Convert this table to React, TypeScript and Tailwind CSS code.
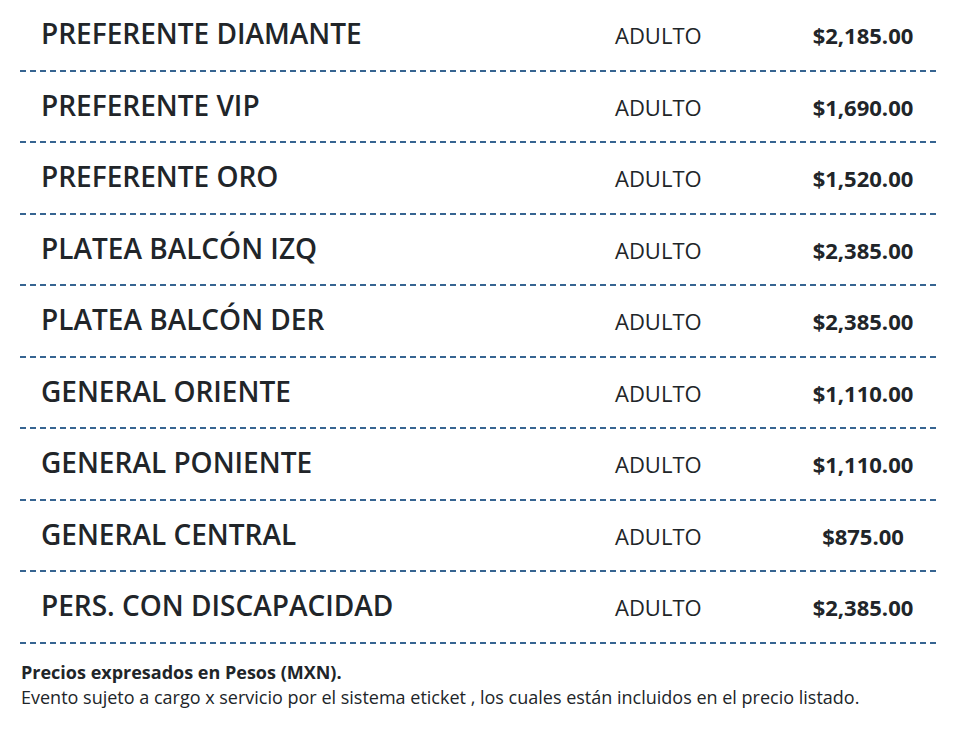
import React from "react";

const rows: [string, string][] = [
  ["PREFERENTE DIAMANTE", "$2,185.00"],
  ["PREFERENTE VIP", "$1,690.00"],
  ["PREFERENTE ORO", "$1,520.00"],
  ["PLATEA BALCÓN IZQ", "$2,385.00"],
  ["PLATEA BALCÓN DER", "$2,385.00"],
  ["GENERAL ORIENTE", "$1,110.00"],
  ["GENERAL PONIENTE", "$1,110.00"],
  ["GENERAL CENTRAL", "$875.00"],
  ["PERS. CON DISCAPACIDAD", "$2,385.00"],
];

export default function App() {
  return (
    <div
      className="w-[953px] h-[731px] bg-white text-[#212529] overflow-hidden"
      style={{ fontFamily: '"Open Sans", "Noto Sans", sans-serif' }}
    >
      <div className="ml-[20px] w-[916px]">
        {rows.map(([name, price]) => (
          <div
            key={name}
            className="flex items-baseline h-[71.5px] pt-[17px] border-b-2 border-dashed border-[#366491]"
          >
            <div className="w-[595px] pl-[21px] text-[28px] leading-[1.2] font-semibold">{name}</div>
            <div className="w-[175px] text-[22px] leading-[1.2]">ADULTO</div>
            <div className="w-[146px] text-center text-[22px] leading-[1.2] font-bold">{price}</div>
          </div>
        ))}
      </div>
      <div className="ml-[21px] mt-[16px] text-[18px] leading-[25px]">
        <div className="font-bold">Precios expresados en Pesos (MXN).</div>
        <div>Evento sujeto a cargo x servicio por el sistema eticket , los cuales están incluidos en el precio listado.</div>
      </div>
    </div>
  );
}
